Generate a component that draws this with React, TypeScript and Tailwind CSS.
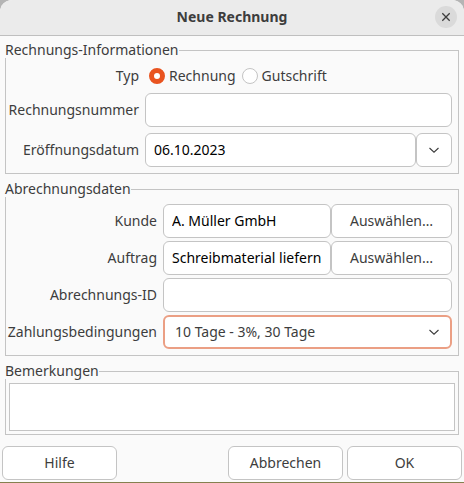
import type { ReactNode } from "react";

const field =
  "h-[34px] w-full min-w-0 rounded-md border border-[#c4c4c4] bg-white px-2 pb-0.5 text-black outline-none";
const button =
  "h-[34px] rounded-md border border-[#c4c4c4] bg-white text-[#3d3d3d]";

function Group({ title, children }: { title: string; children: ReactNode }) {
  return (
    <fieldset className="min-w-0 border border-[#c4c4c4]">
      <legend className="-ml-px h-4 leading-4">{title}</legend>
      {children}
    </fieldset>
  );
}

function Label({ id, children }: { id: string; children: ReactNode }) {
  return (
    <label htmlFor={id} className="flex justify-end whitespace-nowrap">
      {children}
    </label>
  );
}

function Chevron() {
  return (
    <svg
      viewBox="0 0 12 12"
      className="h-3 w-3"
      fill="none"
      stroke="#3d3d3d"
      strokeWidth="1.1"
      aria-hidden="true"
    >
      <path d="M1.500 4l4.500 4.200 4.500-4.200" />
    </svg>
  );
}

export default function App() {
  return (
    <div className="bg-[#b4b4b4] font-['Noto_Sans','Open_Sans',sans-serif] text-[14px] leading-5 text-[#3d3d3d]">
      <div className="overflow-hidden rounded-t-xl bg-[#fafafa]">
        <header className="grid h-9 grid-cols-[24px_1fr_24px] items-center border-b border-[#bfbfbf] bg-[#ebebeb] px-[7px] pb-px">
          <h1 className="col-start-2 text-center font-bold">Neue Rechnung</h1>
          <button
            type="button"
            aria-label="Schließen"
            className="flex h-[22px] w-[22px] items-center justify-center justify-self-end rounded-full bg-[#dadada]"
          >
            <svg viewBox="0 0 10 10" className="h-2.5 w-2.5" stroke="#3d3d3d" strokeWidth="1.3">
              <path d="M1.300 1.300l7.400 7.400M8.700 1.300l-7.400 7.400" />
            </svg>
          </button>
        </header>

        <form>
          <div className="flex flex-col gap-[7px] px-[5px] pt-1.5">
            <Group title="Rechnungs-Informationen">
              <div className="grid grid-cols-[127px_1fr] items-center gap-1.5 px-1.5 pt-[7px] pb-1.5">
                <span id="typ" className="text-right">
                  Typ
                </span>
                <div role="radiogroup" aria-labelledby="typ" className="flex h-[22px] items-center gap-1.5 pl-1">
                  <label className="flex items-center gap-1">
                    <input
                      type="radio"
                      name="typ"
                      defaultChecked
                      className="h-4 w-4 appearance-none rounded-full border border-[#c4c4c4] bg-white checked:border-[5px] checked:border-[#e95420]"
                    />
                    Rechnung
                  </label>
                  <label className="flex items-center gap-1">
                    <input
                      type="radio"
                      name="typ"
                      className="h-4 w-4 appearance-none rounded-full border border-[#c4c4c4] bg-white checked:border-[5px] checked:border-[#e95420]"
                    />
                    Gutschrift
                  </label>
                </div>
                <Label id="nummer">Rechnungsnummer</Label>
                <input id="nummer" className={field} />
                <Label id="datum">Eröffnungsdatum</Label>
                <div className="flex">
                  <input id="datum" defaultValue="06.10.2023" className={field} />
                  <button
                    type="button"
                    aria-label="Kalender öffnen"
                    className={`${button} flex w-9 shrink-0 items-center justify-center`}
                  >
                    <Chevron />
                  </button>
                </div>
              </div>
            </Group>

            <Group title="Abrechnungsdaten">
              <div className="grid grid-cols-[145px_1fr] items-center gap-x-1.5 gap-y-[3px] px-1.5 pt-[7px] pb-1.5">
                <Label id="kunde">Kunde</Label>
                <div className="flex">
                  <input id="kunde" defaultValue="A. Müller GmbH" className={field} />
                  <button type="button" className={`${button} w-[121px] shrink-0`}>
                    Auswählen…
                  </button>
                </div>
                <Label id="auftrag">Auftrag</Label>
                <div className="flex">
                  <input id="auftrag" defaultValue="Schreibmaterial liefern" className={field} />
                  <button type="button" className={`${button} w-[121px] shrink-0`}>
                    Auswählen…
                  </button>
                </div>
                <Label id="abrechnung">Abrechnungs-ID</Label>
                <input id="abrechnung" className={field} />
                <Label id="zahlung">Zahlungsbedingungen</Label>
                <div className="grid items-center">
                  <select
                    id="zahlung"
                    className="col-start-1 row-start-1 h-[34px] w-full appearance-none rounded-md border-2 border-[#eb9f84] bg-white px-2.5 outline-none"
                  >
                    <option>10 Tage - 3%, 30 Tage</option>
                  </select>
                  <span className="pointer-events-none col-start-1 row-start-1 mr-3 justify-self-end">
                    <Chevron />
                  </span>
                </div>
              </div>
            </Group>

            <Group title="Bemerkungen">
              <div className="px-[3px] pt-1 pb-[3px]">
                <textarea
                  aria-label="Bemerkungen"
                  className="block h-12 w-full resize-none border border-[#c4c4c4] bg-white px-1 outline-none"
                />
              </div>
            </Group>
          </div>

          <div className="flex gap-1 px-0.5 pt-[11px] pb-0.5">
            <button type="button" className={`${button} mr-auto w-[115px]`}>
              Hilfe
            </button>
            <button type="button" className={`${button} w-[115px]`}>
              Abbrechen
            </button>
            <button type="button" className={`${button} w-[115px]`}>
              OK
            </button>
          </div>
        </form>
      </div>
      <div className="h-px bg-[#85804f]" />
    </div>
  );
}
